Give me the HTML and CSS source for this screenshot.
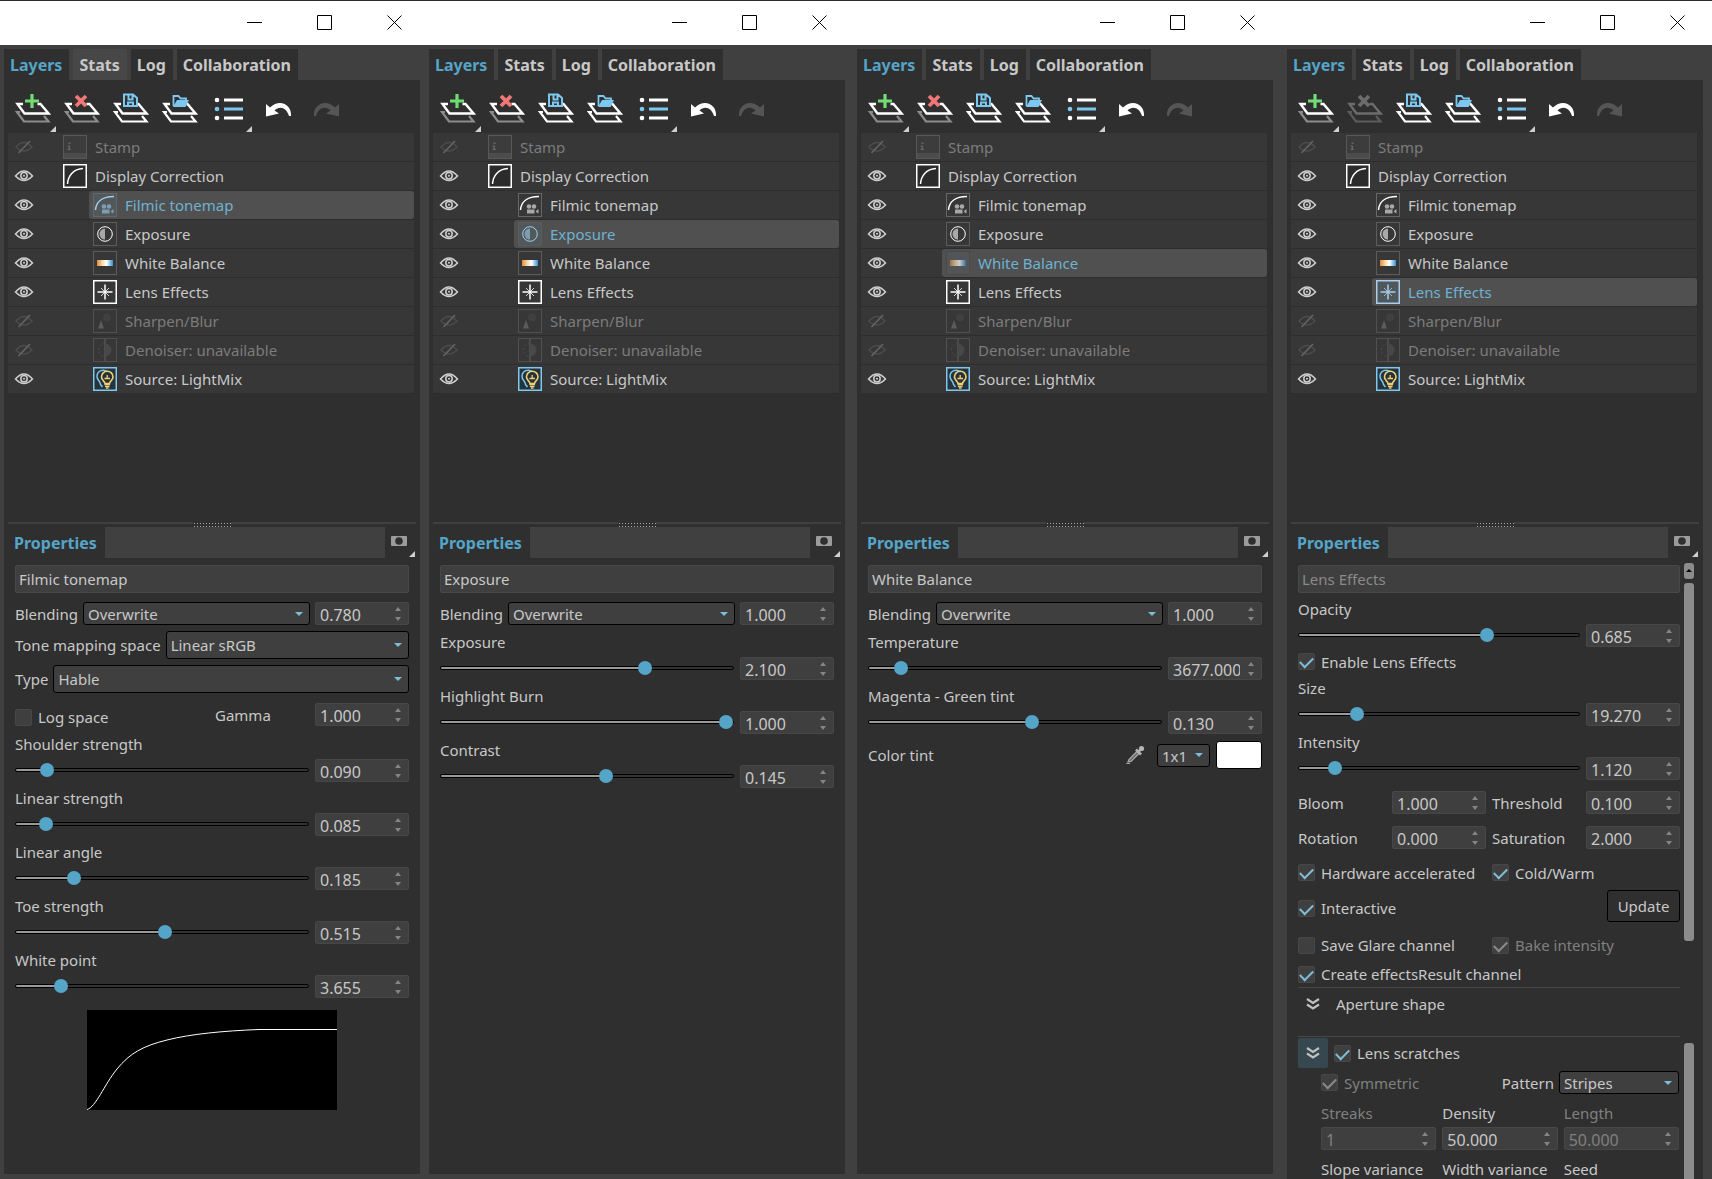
FILE: index.html
```
<!DOCTYPE html>
<html lang="en">
<head>
    <meta charset="UTF-8">
    <meta name="viewport" content="width=device-width, initial-scale=1.0">
    <title>Frame buffer - Layers</title>
    <link rel="stylesheet" href="styles.css">
</head>
<body>

<!-- Icon set -->
<svg class="sprite" aria-hidden="true">
    <defs>
        <linearGradient id="balance">
            <stop offset="0" stop-color="#e8883a"/>
            <stop offset="0.35" stop-color="#f5dfae"/>
            <stop offset="0.6" stop-color="#ffffff"/>
            <stop offset="1" stop-color="#2f8fd0"/>
        </linearGradient>
    </defs>
    <symbol id="i-sheets" viewBox="1 0 36 32">
        <path class="sheet-low" d="M6 20H3L10 29.5H34.500l-4.500-5.500" fill="none" stroke-width="2.200"/>
        <path d="M9 12H3.500L10.500 21.500H34.500l-8-9.500h-3" fill="none" stroke="currentColor" stroke-width="2.400"/>
    </symbol>
    <symbol id="i-plus" viewBox="1 0 36 32">
        <path d="M18 2v14M11 9h14" stroke="#72dc74" stroke-width="3.200"/>
    </symbol>
    <symbol id="i-cross" viewBox="1 0 36 32">
        <path d="M13 4l10 10M23 4l-10 10" stroke="currentColor" stroke-width="3.800"/>
    </symbol>
    <symbol id="i-floppy" viewBox="1 0 36 32">
        <path class="hole" d="M11 1.500h12l3 4v9.500H11z"/>
        <path d="M12 2.500h9l4 3.500v8H12zM16.500 3v4.500h4V3M16 14v-3.500h5V14" fill="none" stroke="#7cc8f0" stroke-width="2"/>
    </symbol>
    <symbol id="i-folder" viewBox="1 0 36 32">
        <path class="hole" d="M11 2.500h14v5h3l-4 7.500H11z"/>
        <path d="M12.500 14V4h5l2 2.500h5.500V9" fill="none" stroke="#7cc8f0" stroke-width="1.800"/>
        <path d="M16 8H28l-3.500 7H12z" fill="#7cc8f0"/>
    </symbol>
    <symbol id="i-list" viewBox="0 0 36 32">
        <g fill="#fff"><circle cx="6" cy="8" r="2.300"/><circle cx="6" cy="26" r="2.300"/><path d="M13 6.500h19v3H13zM13 24.500h19v3H13z"/></g>
        <g fill="#7cc8f0"><circle cx="6" cy="17" r="2.300"/><path d="M13 15.500h19v3H13z"/></g>
    </symbol>
    <symbol id="i-undo" viewBox="0 0 36 32">
        <path d="M6 12v12.500l13-3-4.500-3c5-5 12-3 14.500 5.500h2c1-11-11-18-21-8.500z" fill="currentColor"/>
    </symbol>
    <symbol id="i-eye" viewBox="0 0 20 14">
        <path d="M1.500 7Q10-3 18.500 7 10 16 1.500 7z" fill="none" stroke="currentColor" stroke-width="1.500"/>
        <circle cx="10" cy="6.800" r="3.200" fill="none" stroke="currentColor" stroke-width="1.500"/>
        <circle cx="10" cy="6.800" r="1" fill="currentColor"/>
    </symbol>
    <symbol id="i-hidden" viewBox="0 0 20 14">
        <path d="M2 7Q10-2 18 7 10 15 2 7z" fill="none" stroke="#4c4c4c" stroke-width="1.500"/>
        <path d="M4.500 13L16 1" stroke="#666" stroke-width="1.500"/>
    </symbol>
    <symbol id="i-stamp" viewBox="0 0 24 24">
        <rect x="0.500" y="0.500" width="23" height="23" fill="#3c3c3c" stroke="#585858"/>
        <path d="M1 18h22v5H1z" fill="#4c4c4c"/>
        <path d="M5.500 7.500h2v1.500h-2zM4.500 10.500H7V14H8v1H4.500v-1h1v-2.500h-1z" fill="#666"/>
    </symbol>
    <symbol id="i-curve" viewBox="0 0 24 24">
        <rect x="0.750" y="0.750" width="22.500" height="22.500" fill="#2b2b2b" stroke="#fff" stroke-width="1.500"/>
        <path d="M4.500 20C5 12 10 5 20 4.500" fill="none" stroke="#fff" stroke-width="1.500"/>
    </symbol>
    <symbol id="i-filmic" viewBox="0 0 24 24">
        <rect x="0.500" y="0.500" width="23" height="23" fill="none" stroke="#666"/>
        <path d="M2.500 17C3 9 9 3.500 21 3.500" fill="none" stroke="currentColor" stroke-width="1.500"/>
        <g class="tone"><circle cx="11" cy="13.500" r="2.300"/><circle cx="16" cy="13.500" r="2.300"/><path d="M9 16.500h7.500v4H9zM18 18l2.500-2v4.500L18 19z"/></g>
    </symbol>
    <symbol id="i-exposure" viewBox="0 0 24 24">
        <rect x="0.500" y="0.500" width="23" height="23" fill="none" stroke="#5c5c5c"/>
        <circle cx="12" cy="12" r="7.300" fill="none" stroke="currentColor"/>
        <path class="tone" d="M12 6.500v11a5.500 5.500 0 0 1 0-11z"/>
    </symbol>
    <symbol id="i-balance" viewBox="0 0 24 24">
        <rect x="0.500" y="0.500" width="23" height="23" fill="none" stroke="#5c5c5c"/>
        <rect class="bar" x="4" y="9" width="16" height="6" fill="url(#balance)"/>
    </symbol>
    <symbol id="i-lens" viewBox="0 0 24 24">
        <rect x="0.750" y="0.750" width="22.500" height="22.500" fill="none" stroke="currentColor" stroke-width="1.500"/>
        <path d="M12 4.500v15M4.500 12h15" stroke="currentColor" stroke-width="1.500"/>
        <path d="M8 8l8 8M16 8l-8 8" stroke="currentColor" opacity="0.800"/>
    </symbol>
    <symbol id="i-sharpen" viewBox="0 0 24 24">
        <rect x="0.500" y="0.500" width="23" height="23" fill="none" stroke="#505050"/>
        <path d="M8 11l3 8.500H5z" fill="#5c5c5c"/>
        <circle cx="14" cy="8.500" r="4" fill="#404040"/>
    </symbol>
    <symbol id="i-denoise" viewBox="0 0 24 24">
        <rect x="0.500" y="0.500" width="23" height="23" fill="none" stroke="#505050"/>
        <path d="M12 1v22" stroke="#555" stroke-width="1.500"/>
        <path d="M12 5.500a6.500 6.500 0 0 1 0 13z" fill="#484848"/>
        <path d="M12 5.500a6.500 6.500 0 0 0 0 13" fill="none" stroke="#4c4c4c" stroke-dasharray="2 2"/>
    </symbol>
    <symbol id="i-light" viewBox="0 0 24 24">
        <rect x="0.750" y="0.750" width="22.500" height="22.500" fill="#26333b" stroke="#7cc8f0" stroke-width="1.500"/>
        <path d="M14 4.500C11 2 4 3 4 9.500c0 4 3.500 4.500 3.500 8l2 2.500" fill="none" stroke="#7cc8f0" stroke-width="1.500"/>
        <path d="M12 16.500c0-2.500-3.500-3-3.500-6.500a5.500 5.500 0 0 1 11.500 0c0 3.500-3.500 4-3.500 6.500z" fill="none" stroke="#f2cf73" stroke-width="1.600"/>
        <path d="M11.500 17.500h5.500M12 19.500h4.500M13 21.200h2.500M14.200 8v4M11.500 11.500h5.500" stroke="#f2cf73" stroke-width="1.300"/>
    </symbol>
    <symbol id="i-camera" viewBox="0 0 16 10">
        <path d="M1 0h14a1 1 0 0 1 1 1v8a1 1 0 0 1-1 1H1a1 1 0 0 1-1-1V1a1 1 0 0 1 1-1z" fill="#9c9c9c"/>
        <circle cx="8" cy="5" r="3.800" fill="#2f2f2f"/>
    </symbol>
    <symbol id="i-dropper" viewBox="0 0 20 20">
        <path d="M3 17l1-2.500L12 6.500l2 2L6 16.500z" fill="#6a6a6a" stroke="#a8a8a8" stroke-width="1.300"/>
        <path d="M11 4.500l5 5M13.500 7l3-3.500" stroke="#b4b4b4" stroke-width="2.600"/>
        <circle cx="16.500" cy="3.500" r="2.600" fill="#b4b4b4"/>
        <path d="M1 18.500h2" stroke="#e07070"/><path d="M3 18.500h2" stroke="#70c0b0"/>
    </symbol>
    <symbol id="i-chevrons" viewBox="0 0 14 14">
        <path d="M1 2l6 4 6-4M1 7.500l6 4 6-4" fill="none" stroke="#c0c0c0" stroke-width="2.200"/>
    </symbol>
</svg>

<!-- Upper half shared by every window -->
<template id="layers-pane">
    <header class="titlebar">
        <button class="win-btn" aria-label="Minimize"><svg width="15" height="15"><path d="M0 7.500h15"/></svg></button>
        <button class="win-btn" aria-label="Maximize"><svg width="15" height="15"><path d="M0.500 0.500h14v14h-14z"/></svg></button>
        <button class="win-btn" aria-label="Close"><svg width="15" height="15"><path d="M0.500 0.500l14 14M14.500 0.500l-14 14"/></svg></button>
    </header>
    <nav class="tabs">
        <button class="tab active">Layers</button>
        <button class="tab stats">Stats</button>
        <button class="tab">Log</button>
        <button class="tab">Collaboration</button>
    </nav>
    <section class="layers">
        <div class="toolbar">
            <button class="tool has-menu" aria-label="Add layer"><svg><use href="#i-sheets"/><use href="#i-plus"/></svg></button>
            <button class="tool remove" aria-label="Remove layer"><svg><use href="#i-sheets"/><use class="cross" href="#i-cross"/></svg></button>
            <button class="tool solid" aria-label="Save layers"><svg><use href="#i-sheets"/><use href="#i-floppy"/></svg></button>
            <button class="tool solid" aria-label="Load layers"><svg><use href="#i-sheets"/><use href="#i-folder"/></svg></button>
            <button class="tool has-menu" aria-label="Presets"><svg><use href="#i-list"/></svg></button>
            <button class="tool" aria-label="Undo"><svg><use href="#i-undo"/></svg></button>
            <button class="tool redo" aria-label="Redo"><svg><use href="#i-undo"/></svg></button>
        </div>
        <ul class="layer-list"></ul>
    </section>
</template>

<main class="windows">

    <div class="window w1" data-selected="Filmic tonemap">
        <section class="properties">
            <div class="splitter"></div>
            <div class="prop-tabs">
                <h2>Properties</h2>
                <button class="camera has-menu" aria-label="Snapshot"><svg><use href="#i-camera"/></svg></button>
            </div>
            <form class="form">
                <input class="name" type="text" value="Filmic tonemap" aria-label="Layer name">
                <div class="row blending">
                    <label for="blend1">Blending</label>
                    <span class="select"><select id="blend1"><option>Overwrite</option></select></span>
                    <span class="spin"><input type="text" value="0.780" aria-label="Blending amount"><i></i></span>
                </div>
                <div class="row tall">
                    <label for="space">Tone mapping space</label>
                    <span class="select"><select id="space"><option>Linear sRGB</option></select></span>
                </div>
                <div class="row tall">
                    <label for="type">Type</label>
                    <span class="select"><select id="type"><option>Hable</option></select></span>
                </div>
                <div class="row gamma-row">
                    <label class="check"><input type="checkbox"> Log space</label>
                    <label class="gamma" for="gamma">Gamma</label>
                    <span class="spin"><input id="gamma" type="text" value="1.000"><i></i></span>
                </div>
                <div class="slider">
                    <label for="shoulder">Shoulder strength</label>
                    <input id="shoulder" type="range" min="0" max="1000" value="88" style="--fill: 9%">
                    <span class="spin"><input type="text" value="0.090" aria-label="Shoulder strength value"><i></i></span>
                </div>
                <div class="slider">
                    <label for="linear">Linear strength</label>
                    <input id="linear" type="range" min="0" max="1000" value="82" style="--fill: 9%">
                    <span class="spin"><input type="text" value="0.085" aria-label="Linear strength value"><i></i></span>
                </div>
                <div class="slider">
                    <label for="angle">Linear angle</label>
                    <input id="angle" type="range" min="0" max="1000" value="182" style="--fill: 19%">
                    <span class="spin"><input type="text" value="0.185" aria-label="Linear angle value"><i></i></span>
                </div>
                <div class="slider">
                    <label for="toe">Toe strength</label>
                    <input id="toe" type="range" min="0" max="1000" value="511" style="--fill: 51%">
                    <span class="spin"><input type="text" value="0.515" aria-label="Toe strength value"><i></i></span>
                </div>
                <div class="slider">
                    <label for="white">White point</label>
                    <input id="white" type="range" min="0" max="1000" value="136" style="--fill: 14%">
                    <span class="spin"><input type="text" value="3.655" aria-label="White point value"><i></i></span>
                </div>
                <svg class="curve" viewBox="0 0 250 100">
                    <path d="M0 99.500C9 97 17 75 30 59S56 36 80 30 135 21 172 19.500H250" fill="none" stroke="#fff"/>
                </svg>
            </form>
        </section>
    </div>

    <div class="window w2" data-selected="Exposure">
        <section class="properties">
            <div class="splitter"></div>
            <div class="prop-tabs">
                <h2>Properties</h2>
                <button class="camera has-menu" aria-label="Snapshot"><svg><use href="#i-camera"/></svg></button>
            </div>
            <form class="form">
                <input class="name" type="text" value="Exposure" aria-label="Layer name">
                <div class="row blending">
                    <label for="blend2">Blending</label>
                    <span class="select"><select id="blend2"><option>Overwrite</option></select></span>
                    <span class="spin"><input type="text" value="1.000" aria-label="Blending amount"><i></i></span>
                </div>
                <div class="slider">
                    <label for="exposure">Exposure</label>
                    <input id="exposure" type="range" min="0" max="1000" value="707" style="--fill: 70%">
                    <span class="spin"><input type="text" value="2.100" aria-label="Exposure value"><i></i></span>
                </div>
                <div class="slider">
                    <label for="burn">Highlight Burn</label>
                    <input id="burn" type="range" min="0" max="1000" value="1000" style="--fill: 98%">
                    <span class="spin"><input type="text" value="1.000" aria-label="Highlight Burn value"><i></i></span>
                </div>
                <div class="slider">
                    <label for="contrast">Contrast</label>
                    <input id="contrast" type="range" min="0" max="1000" value="568" style="--fill: 56%">
                    <span class="spin"><input type="text" value="0.145" aria-label="Contrast value"><i></i></span>
                </div>
            </form>
        </section>
    </div>

    <div class="window w3" data-selected="White Balance">
        <section class="properties">
            <div class="splitter"></div>
            <div class="prop-tabs">
                <h2>Properties</h2>
                <button class="camera has-menu" aria-label="Snapshot"><svg><use href="#i-camera"/></svg></button>
            </div>
            <form class="form">
                <input class="name" type="text" value="White Balance" aria-label="Layer name">
                <div class="row blending">
                    <label for="blend3">Blending</label>
                    <span class="select"><select id="blend3"><option>Overwrite</option></select></span>
                    <span class="spin"><input type="text" value="1.000" aria-label="Blending amount"><i></i></span>
                </div>
                <div class="slider">
                    <label for="temperature">Temperature</label>
                    <input id="temperature" type="range" min="0" max="1000" value="91" style="--fill: 10%">
                    <span class="spin"><input type="text" value="3677.000" aria-label="Temperature value"><i></i></span>
                </div>
                <div class="slider">
                    <label for="tint">Magenta - Green tint</label>
                    <input id="tint" type="range" min="0" max="1000" value="560" style="--fill: 56%">
                    <span class="spin"><input type="text" value="0.130" aria-label="Magenta - Green tint value"><i></i></span>
                </div>
                <div class="row tall tint-row">
                    <span class="grow">Color tint</span>
                    <button class="dropper" type="button" aria-label="Pick color"><svg><use href="#i-dropper"/></svg></button>
                    <span class="select small"><select aria-label="Sample size"><option>1x1</option></select></span>
                    <button class="swatch" type="button" aria-label="Tint color"></button>
                </div>
            </form>
        </section>
    </div>

    <div class="window w4" data-selected="Lens Effects">
        <section class="properties">
            <div class="splitter"></div>
            <div class="prop-tabs">
                <h2>Properties</h2>
                <button class="camera has-menu" aria-label="Snapshot"><svg><use href="#i-camera"/></svg></button>
            </div>
            <div class="scroll-area">
                <form class="form">
                    <input class="name" type="text" value="Lens Effects" aria-label="Layer name" disabled>
                    <div class="slider">
                        <label for="opacity">Opacity</label>
                        <input id="opacity" type="range" min="0" max="1000" value="680" style="--fill: 68%">
                        <span class="spin"><input type="text" value="0.685" aria-label="Opacity value"><i></i></span>
                    </div>
                    <label class="check enable"><input type="checkbox" checked> Enable Lens Effects</label>
                    <div class="slider">
                        <label for="size">Size</label>
                        <input id="size" type="range" min="0" max="1000" value="190" style="--fill: 20%">
                        <span class="spin"><input type="text" value="19.270" aria-label="Size value"><i></i></span>
                    </div>
                    <div class="slider">
                        <label for="intensity">Intensity</label>
                        <input id="intensity" type="range" min="0" max="1000" value="108" style="--fill: 11%">
                        <span class="spin"><input type="text" value="1.120" aria-label="Intensity value"><i></i></span>
                    </div>
                    <div class="pairs">
                        <div class="row"><label class="grow" for="bloom">Bloom</label><span class="spin"><input id="bloom" type="text" value="1.000"><i></i></span></div>
                        <div class="row"><label class="grow" for="threshold">Threshold</label><span class="spin"><input id="threshold" type="text" value="0.100"><i></i></span></div>
                        <div class="row"><label class="grow" for="rotation">Rotation</label><span class="spin"><input id="rotation" type="text" value="0.000"><i></i></span></div>
                        <div class="row"><label class="grow" for="saturation">Saturation</label><span class="spin"><input id="saturation" type="text" value="2.000"><i></i></span></div>
                    </div>
                    <div class="checks">
                        <label class="check"><input type="checkbox" checked> Hardware accelerated</label>
                        <label class="check"><input type="checkbox" checked> Cold/Warm</label>
                        <label class="check"><input type="checkbox" checked> Interactive</label>
                        <button class="update" type="button">Update</button>
                        <label class="check"><input type="checkbox"> Save Glare channel</label>
                        <label class="check off"><input type="checkbox" checked disabled> Bake intensity</label>
                        <label class="check wide"><input type="checkbox" checked> Create effectsResult channel</label>
                    </div>
                    <div class="group">
                        <button class="fold" type="button" aria-label="Expand Aperture shape"><svg><use href="#i-chevrons"/></svg></button>
                        <span class="group-name">Aperture shape</span>
                    </div>
                    <div class="group scratches">
                        <button class="fold hot" type="button" aria-label="Collapse Lens scratches"><svg><use href="#i-chevrons"/></svg></button>
                        <label class="check"><input type="checkbox" checked> Lens scratches</label>
                    </div>
                    <div class="nested">
                        <div class="row pattern">
                            <label class="check off grow"><input type="checkbox" checked disabled> Symmetric</label>
                            <label for="pattern">Pattern</label>
                            <span class="select"><select id="pattern"><option>Stripes</option></select></span>
                        </div>
                        <div class="fields">
                            <div class="field off"><label for="streaks">Streaks</label><span class="spin"><input id="streaks" type="text" value="1" disabled><i></i></span></div>
                            <div class="field"><label for="density">Density</label><span class="spin"><input id="density" type="text" value="50.000"><i></i></span></div>
                            <div class="field off"><label for="length">Length</label><span class="spin"><input id="length" type="text" value="50.000" disabled><i></i></span></div>
                            <div class="field"><label for="slope">Slope variance</label><span class="spin"><input id="slope" type="text" value="0.000"><i></i></span></div>
                            <div class="field"><label for="widthvar">Width variance</label><span class="spin"><input id="widthvar" type="text" value="0.000"><i></i></span></div>
                            <div class="field"><label for="seed">Seed</label><span class="spin"><input id="seed" type="text" value="0"><i></i></span></div>
                        </div>
                    </div>
                </form>
                <div class="scrollbar">
                    <span class="bar-up"></span>
                    <span class="thumb"></span>
                    <span class="thumb rest"></span>
                </div>
            </div>
        </section>
    </div>

</main>

<script src="script.js"></script>
</body>
</html>
```
FILE: styles.css
```
* {
    box-sizing: border-box;
}
body {
    margin: 0;
    height: 100vh;
    overflow: hidden;
    background-color: #404040;
    color: #c8c8c8;
    font-family: 'Noto Sans', sans-serif;
    font-size: 15px;
    line-height: 22px;
}
button, input, select {
    margin: 0;
    padding: 0;
    border: none;
    background: none;
    color: inherit;
    font: inherit;
}
svg {
    display: block;
}
.sprite {
    position: absolute;
    width: 0;
    height: 0;
}
.windows {
    display: grid;
    grid-template-columns: 425fr 428fr 430fr 429fr;
    height: 100%;
}
.window {
    display: flex;
    flex-direction: column;
    min-width: 0;
    min-height: 0;
    padding-left: 4px;
    padding-bottom: 5px;
    border-top: 1px solid #2d2b2e;
    background: linear-gradient(#fff 44px, #404040 44px);
}
.w1 { padding-right: 5px; }
.w2 { padding-right: 8px; }
.w3 { padding-right: 10px; }
.w4 { padding-right: 9px; padding-bottom: 0; }

/* Title bar */
.titlebar {
    display: flex;
    flex: none;
    justify-content: flex-end;
    gap: 20px;
    height: 44px;
    padding: 0 1px 2px 0;
}
.win-btn {
    display: flex;
    align-items: center;
    justify-content: center;
    width: 50px;
}
.win-btn svg {
    fill: none;
    stroke: #000;
}

/* Tabs */
.tabs {
    display: flex;
    flex: none;
    gap: 4px;
    margin-top: 4px;
    height: 31px;
}
.tab {
    padding: 0 7px 0 6px;
    background-color: #2f2f2f;
    font-size: 16px;
    font-weight: bold;
}
.tab.active {
    color: #55a5c8;
}
.w1 .stats {
    background-color: #474747;
}

/* Toolbar */
.layers {
    flex: none;
    height: 442px;
    padding: 0 6px 0 4px;
    background-color: #2f2f2f;
}
.toolbar {
    display: flex;
    height: 53px;
}
.tool {
    --low: #8c8c8c;
    position: relative;
    width: 49px;
    height: 53px;
    color: #fff;
}
.tool svg {
    width: 36px;
    height: 32px;
    margin: 2px auto 0;
}
.sheet-low {
    stroke: var(--low);
}
.hole {
    fill: #2f2f2f;
}
.solid {
    --low: #fff;
}
.cross {
    color: #f47777;
}
.w4 .remove, .w4 .cross {
    --low: #5c5c5c;
    color: #6c6c6c;
}
.redo {
    color: #555;
}
.redo svg {
    transform: scaleX(-1);
}
.has-menu::after {
    content: "";
    position: absolute;
    right: 1px;
    bottom: 1px;
    border-left: 6px solid transparent;
    border-bottom: 6px solid #cfcfcf;
}

/* Layer list */
.layer-list {
    margin: 0;
    padding: 0;
    list-style: none;
}
.layer {
    display: flex;
    height: 29px;
    border-bottom: 1px solid #2d2d2d;
    background-color: #373737;
}
.eye {
    width: 32px;
    height: 28px;
    color: #cfcfcf;
}
.eye svg {
    width: 20px;
    height: 14px;
    margin: 0 auto;
}
.layer-name {
    display: flex;
    align-items: center;
    flex: 1;
    gap: 8px;
    margin-left: 19px;
    padding-left: 4px;
    border-radius: 3px;
}
.layer-name svg {
    width: 24px;
    height: 24px;
    color: #fff;
}
.child .layer-name {
    margin-left: 49px;
}
.tone {
    fill: var(--tone, #a8a8a8);
}
.muted .layer-name {
    color: #7c7c7c;
}
.selected .layer-name {
    --tone: #7f9db0;
    background-color: #505050;
    color: #6fb2d0;
}
.selected .layer-name svg {
    background-color: rgba(85, 165, 200, 0.1);
    color: #a9cdea;
}
.selected .bar-icon {
    filter: saturate(0.7) brightness(0.8);
}

/* Properties */
.properties {
    display: flex;
    flex: 1;
    flex-direction: column;
    min-height: 0;
    overflow: hidden;
    background-color: #2f2f2f;
}
.splitter {
    flex: none;
    height: 5px;
    margin: 0 4px;
    background: linear-gradient(#404040, #404040) center top / 100% 2px no-repeat;
}
/* drag grip */
.splitter::before {
    content: "";
    display: block;
    width: 38px;
    height: 5px;
    margin: 0 auto;
    background: radial-gradient(circle at center, #a8a8a8 1px, #2f2f2f 1px) 0 0 / 3px 3px;
}
.prop-tabs {
    display: flex;
    flex: none;
    height: 31px;
    margin: 0 5px 0 4px;
    background-color: #404040;
}
.prop-tabs h2 {
    margin: 0;
    padding: 0 8px 0 6px;
    background-color: #2f2f2f;
    color: #55a5c8;
    font-size: 16px;
    line-height: 32px;
}
.camera {
    position: relative;
    width: 30px;
    margin-left: auto;
    background-color: #2f2f2f;
}
.camera.has-menu::after {
    right: 0;
}
.camera svg {
    width: 16px;
    height: 10px;
    margin: -4px 0 0 6px;
}
.form {
    flex: 1;
    min-width: 0;
    padding: 7px 11px 0;
}
.name {
    display: block;
    width: 100%;
    height: 28px;
    margin-bottom: 9px;
    padding: 0 3px;
    border: 1px solid #484848;
    border-radius: 2px;
    background-color: #3f3f3f;
}
.name:disabled {
    color: #8a8a8a;
}
.row {
    display: flex;
    align-items: center;
    gap: 5px;
    height: 23px;
}
.blending {
    margin-bottom: 6px;
}
.tall {
    height: 28px;
    margin-bottom: 6px;
}
.grow {
    flex: 1;
}
.select {
    position: relative;
    flex: 1;
    height: 100%;
}
.select select {
    width: 100%;
    height: 100%;
    padding: 0 20px 0 4px;
    border: 1px solid #000;
    border-radius: 3px;
    background-color: #3f3f3f;
    appearance: none;
}
.select::after {
    content: "";
    position: absolute;
    top: calc(50% - 2px);
    right: 7px;
    border: 4px solid transparent;
    border-top-color: #7fbcd6;
    border-bottom: none;
}
.spin {
    display: flex;
    flex: none;
    align-items: center;
    width: 94px;
    height: 23px;
    border: 1px solid #474747;
    border-radius: 2px;
    background-color: #3f3f3f;
}
.spin input {
    flex: 1;
    width: 0;
    padding: 2px 0 0 4px;
    font-size: 16px;
    line-height: 20px;
}
/* up and down arrows */
.spin i {
    display: flex;
    flex-direction: column;
    gap: 6px;
    margin: 0 7px 0 8px;
}
.spin i::before, .spin i::after {
    content: "";
    border: 3px solid transparent;
    border-top: none;
    border-bottom: 4px solid #858585;
}
.spin i::after {
    border-bottom: none;
    border-top: 4px solid #858585;
}
.check {
    display: flex;
    align-items: center;
    gap: 6px;
}
.check input {
    display: flex;
    justify-content: center;
    width: 17px;
    height: 17px;
    border: 1px solid #474747;
    border-radius: 2px;
    background-color: #3f3f3f;
    appearance: none;
}
.check input:checked::before {
    content: "";
    width: 11px;
    height: 6px;
    margin-top: 3px;
    border-left: 2px solid #7fbcd6;
    border-bottom: 2px solid #7fbcd6;
    transform: rotate(-45deg);
}
.check input:disabled::before {
    border-color: #8a8a8a;
}
.off {
    color: #808080;
}
.gamma-row {
    margin: 10px 0 7px;
}
.gamma-row .check {
    width: 195px;
    padding-top: 5px;
}
.gamma-row .spin {
    margin-left: auto;
}
.slider {
    display: grid;
    grid-template-columns: 1fr 94px;
    column-gap: 6px;
    row-gap: 4px;
    margin-bottom: 5px;
}
.slider label {
    grid-column: 1 / 3;
}
.slider input[type="range"] {
    width: 100%;
    height: 22px;
    appearance: none;
}
.slider input::-webkit-slider-runnable-track {
    height: 4px;
    border: 1px solid #000;
    border-radius: 2px;
    background: linear-gradient(90deg, #9a9a9a var(--fill), #333 var(--fill));
}
.slider input::-webkit-slider-thumb {
    width: 14px;
    height: 14px;
    margin-top: -6px;
    border-radius: 50%;
    background-color: #55a5c8;
    appearance: none;
}
.curve {
    width: 250px;
    height: 100px;
    margin: 12px auto 0;
    background-color: #000;
}
.tint-row {
    gap: 6px;
    margin-top: 7px;
}
.dropper {
    margin-right: 6px;
}
.dropper svg {
    width: 20px;
    height: 20px;
}
.small {
    flex: none;
    width: 53px;
    height: 23px;
}
.swatch {
    width: 46px;
    height: 28px;
    border: 1px solid #000;
    border-radius: 3px;
    background-color: #fff;
}

/* Lens Effects */
.scroll-area {
    display: flex;
    flex: 1;
    min-height: 0;
}
.scroll-area .form {
    padding-right: 4px;
}
.scroll-area .name {
    margin-bottom: 5px;
}
.enable {
    height: 19px;
    margin-bottom: 6px;
}
.pairs {
    display: grid;
    grid-template-columns: 1fr 1fr;
    gap: 12px 6px;
    margin-top: 11px;
}
.checks {
    display: grid;
    grid-template-columns: 1fr 1fr;
    grid-template-rows: 29px 42px 32px 26px;
    column-gap: 6px;
    margin-top: 9px;
}
.update {
    justify-self: end;
    width: 73px;
    height: 32px;
    margin-top: 3px;
    border: 1px solid #000;
    border-radius: 3px;
}
.wide {
    grid-column: 1 / 3;
}
.group {
    display: flex;
    align-items: center;
    gap: 6px;
    height: 49px;
    padding-bottom: 16px;
    border-top: 1px solid #484848;
}
.group-name {
    margin-left: 2px;
}
.fold {
    width: 30px;
    height: 30px;
    border-radius: 2px;
}
.fold svg {
    width: 14px;
    height: 14px;
    margin: 0 auto;
}
.fold.hot {
    background-color: #37474f;
}
.scratches {
    height: 33px;
    padding-bottom: 0;
}
.nested {
    padding: 0 1px 0 23px;
}
.pattern {
    margin: 2px 0 8px;
}
.pattern .select {
    flex: none;
    width: 120px;
}
.fields {
    display: grid;
    grid-template-columns: 1fr 1fr 1fr;
    gap: 8px 6px;
}
.field .spin {
    width: 100%;
    margin-top: 3px;
}
.scrollbar {
    display: flex;
    flex-direction: column;
    width: 10px;
    margin-right: 9px;
    padding-top: 5px;
}
.bar-up {
    flex: none;
    height: 16px;
    margin-bottom: 4px;
    border-radius: 3px;
    background-color: #8c8c8c;
}
.bar-up::before {
    content: "";
    display: block;
    width: 0;
    margin: 0 auto;
    border: 3px solid transparent;
    border-bottom-color: #000;
    padding-top: 3px;
}
.thumb {
    flex: 358 0 0;
    border-radius: 3px;
    background-color: #8c8c8c;
}
.thumb.rest {
    flex: 136 0 0;
    margin-top: 102px;
    border-radius: 3px 3px 0 0;
}
```
FILE: script.js
```
const layers = [
    { name: "Stamp", icon: "stamp", muted: true },
    { name: "Display Correction", icon: "curve" },
    { name: "Filmic tonemap", icon: "filmic", child: true },
    { name: "Exposure", icon: "exposure", child: true },
    { name: "White Balance", icon: "balance", child: true },
    { name: "Lens Effects", icon: "lens", child: true },
    { name: "Sharpen/Blur", icon: "sharpen", child: true, muted: true },
    { name: "Denoiser: unavailable", icon: "denoise", child: true, muted: true },
    { name: "Source: LightMix", icon: "light", child: true }
];

function layerRow(layer, selected) {
    const classes = ["layer"];
    if (layer.child) classes.push("child");
    if (layer.muted) classes.push("muted");
    if (layer.name === selected) classes.push("selected");
    const eye = layer.muted ? "hidden" : "eye";
    const iconClass = layer.icon === "balance" ? "bar-icon" : "icon";
    return `<li class="${classes.join(" ")}">
        <button class="eye" aria-label="Toggle ${layer.name}"><svg><use href="#i-${eye}"/></svg></button>
        <span class="layer-name"><svg class="${iconClass}"><use href="#i-${layer.icon}"/></svg>${layer.name}</span>
    </li>`;
}

// Put the shared upper half into each window, then fill its list
document.querySelectorAll(".window").forEach(win => {
    const pane = document.getElementById("layers-pane").content.cloneNode(true);
    const list = pane.querySelector(".layer-list");
    list.innerHTML = layers.map(layer => layerRow(layer, win.dataset.selected)).join("");
    win.prepend(pane);
});

// Keep the filled part of a slider in step with its handle
document.querySelectorAll("input[type=range]").forEach(range => {
    range.addEventListener("input", () => {
        range.style.setProperty("--fill", range.value / 10 + "%");
    });
});
```
